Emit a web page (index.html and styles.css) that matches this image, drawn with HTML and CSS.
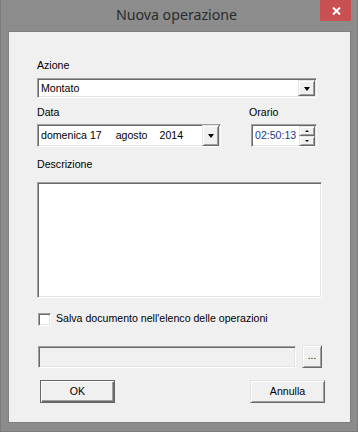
FILE: index.html
```html
<!DOCTYPE html>
<html lang="it">
<head>
<meta charset="utf-8">
<title>Nuova operazione</title>
<link rel="stylesheet" href="styles.css">
</head>
<body>
<div class="window">
  <div class="titlebar">
    <span></span>
    <span class="title">Nuova operazione</span>
    <button class="close" aria-label="Chiudi">
      <svg width="9" height="8" viewBox="0 0 9 8"><path d="M1 0.5 L8 7.5 M8 0.5 L1 7.5" stroke="#fff" stroke-width="2" fill="none"/></svg>
    </button>
  </div>
  <div class="client">
    <div class="label">Azione</div>
    <div class="combo sunken">
      <span class="combo-text">Montato</span>
      <span class="drop raised"><i class="arrow"></i></span>
    </div>

    <div class="row-dt">
      <div class="col-date">
        <div class="label">Data</div>
        <div class="picker sunken">
          <span class="date-text"><span>domenica 17</span><span class="month">agosto</span><span class="year">2014</span></span>
          <span class="drop drop-tall raised"><i class="arrow"></i></span>
        </div>
      </div>
      <div class="col-time">
        <div class="label">Orario</div>
        <div class="timebox sunken">
          <span class="time-text">02:50:13</span>
          <span class="spin">
            <span class="spin-btn raised"><i class="mini-up"></i></span>
            <span class="spin-btn raised"><i class="mini-down"></i></span>
          </span>
        </div>
      </div>
    </div>

    <div class="label label-desc">Descrizione</div>
    <div class="memo sunken"></div>

    <div class="check-row">
      <span class="checkbox sunken"></span>
      <span class="check-label">Salva documento nell'elenco delle operazioni</span>
    </div>

    <div class="path-row">
      <div class="path sunken"></div>
      <button class="btn btn-dots raised">...</button>
    </div>

    <div class="btn-row">
      <button class="btn btn-main default">OK</button>
      <button class="btn btn-main raised">Annulla</button>
    </div>
  </div>
</div>
</body>
</html>
```

FILE: styles.css
```css
* { box-sizing: border-box; }

html, body {
  margin: 0;
  padding: 0;
}

body {
  width: 358px;
  height: 432px;
  overflow: hidden;
  font-family: "Liberation Sans", Arial, sans-serif;
  font-size: 10.6px;
  color: #000;
}

.window {
  width: 358px;
  height: 432px;
  background: #8c8c8c;
  border: 1px solid #7b7b7b;
  border-top: none;
  padding: 0 6px 8px 7px;
  display: flex;
  flex-direction: column;
}

.titlebar {
  height: 31px;
  margin: 0 -6px 0 -7px;
  padding-right: 6px;
  display: grid;
  grid-template-columns: 1fr auto 1fr;
  align-items: start;
}

.title {
  font-family: "Noto Sans", "Open Sans", sans-serif;
  font-size: 14.2px;
  line-height: 20px;
  color: #2b2b2b;
  padding-top: 5px;
  padding-left: 1px;
}

.close {
  justify-self: end;
  width: 31px;
  height: 21px;
  border: none;
  padding: 0;
  margin: 0;
  background: #c75050;
  display: flex;
  align-items: center;
  justify-content: center;
}

.close svg { display: block; margin-left: 1px; margin-top: 1px; }

.client {
  flex: 1;
  background: #f0f0f0;
  border: 1px solid #808080;
  padding: 27px 0 0 28px;
  display: flex;
  flex-direction: column;
  align-items: flex-start;
}

.label {
  height: 13px;
  line-height: 13px;
  white-space: nowrap;
}

/* 3D borders */
.sunken {
  border: 1px solid;
  border-color: #a0a0a0 #ffffff #ffffff #a0a0a0;
  box-shadow: inset 1px 1px 0 #696969, inset -1px -1px 0 #e3e3e3;
}

.raised {
  border: 1px solid;
  border-color: #e3e3e3 #696969 #696969 #e3e3e3;
  box-shadow: inset 1px 1px 0 #ffffff, inset -1px -1px 0 #a0a0a0;
  background: #f0f0f0;
}

.combo {
  margin-top: 6px;
  width: 280px;
  height: 20px;
  background: #fff;
  display: flex;
  align-items: center;
  justify-content: space-between;
  padding: 1px 1px 1px 3px;
}

.combo-text { line-height: 13px; }

.drop {
  width: 17px;
  height: 16px;
  display: flex;
  align-items: center;
  justify-content: center;
}

.drop-tall { height: 21px; }

.arrow {
  display: block;
  width: 0;
  height: 0;
  border-left: 3.5px solid transparent;
  border-right: 3.5px solid transparent;
  border-top: 4px solid #000;
  margin-top: 1px;
}

.row-dt {
  margin-top: 8px;
  display: flex;
  gap: 28px;
}

.col-date, .col-time {
  display: flex;
  flex-direction: column;
  gap: 5px;
}

.picker {
  width: 184px;
  height: 23px;
  background: #fff;
  display: flex;
  align-items: center;
  justify-content: space-between;
  padding: 1px 1px 1px 3px;
}

.date-text {
  display: flex;
  white-space: nowrap;
  line-height: 13px;
}

.month { margin-left: 14px; }
.year { margin-left: 12px; }

.timebox {
  margin-left: 2px;
  width: 66px;
  height: 23px;
  background: #fff;
  display: flex;
  align-items: center;
  justify-content: space-between;
  padding: 1px 1px 1px 3px;
}

.time-text {
  color: #1a3b8a;
  line-height: 13px;
}

.spin {
  display: flex;
  flex-direction: column;
  height: 20px;
  width: 16px;
}

.spin-btn {
  flex: 1;
  display: flex;
  align-items: center;
  justify-content: center;
}

.mini-up, .mini-down {
  display: block;
  width: 0;
  height: 0;
  border-left: 2px solid transparent;
  border-right: 2px solid transparent;
}
.mini-up { border-bottom: 2px solid #000; }
.mini-down { border-top: 2px solid #000; }

.label-desc { margin-top: 11px; }

.memo {
  margin-top: 11px;
  width: 285px;
  height: 116px;
  background: #fff;
}

.check-row {
  margin-top: 15px;
  margin-left: 1px;
  display: flex;
  align-items: flex-start;
  gap: 5px;
}

.checkbox {
  width: 13px;
  height: 13px;
  background: #fff;
}

.check-label {
  line-height: 13px;
  margin-top: -1px;
  white-space: nowrap;
}

.path-row {
  margin-top: 19px;
  margin-left: 1px;
  display: flex;
  align-items: center;
  gap: 6px;
}

.path {
  width: 258px;
  height: 22px;
  background: #f0f0f0;
}

.btn {
  font-family: "Liberation Sans", Arial, sans-serif;
  font-size: 10.6px;
  color: #000;
  margin: 0;
  padding: 0;
  cursor: default;
}

.btn-dots {
  width: 20px;
  height: 23px;
  line-height: 13px;
  padding-bottom: 3px;
  font-size: 10px;
}

.btn-row {
  margin-top: 12px;
  margin-left: 3px;
  width: 285px;
  display: flex;
  justify-content: space-between;
}

.btn-main {
  width: 75px;
  height: 23px;
  line-height: 13px;
}

.default {
  border: 1px solid #646464;
  background: #f0f0f0;
  box-shadow: inset 1px 1px 0 #ffffff, inset -1px -1px 0 #696969, inset -2px -2px 0 #a0a0a0;
}
```
